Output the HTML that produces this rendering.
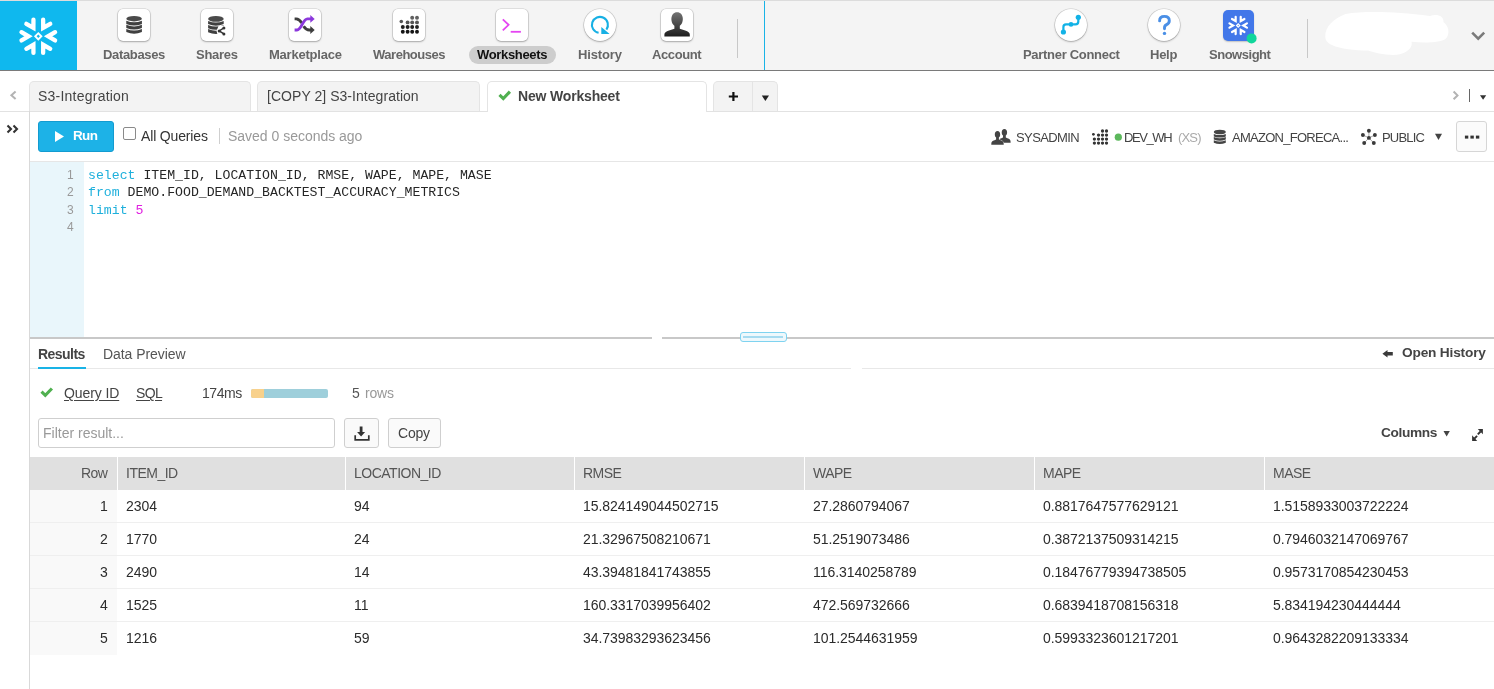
<!DOCTYPE html>
<html><head><meta charset="utf-8">
<style>
html,body{margin:0;padding:0;}
body{width:1494px;height:689px;overflow:hidden;position:relative;background:#fff;font-family:"Liberation Sans", sans-serif;}
.a{position:absolute;box-sizing:border-box;}
.t{position:absolute;white-space:nowrap;line-height:1;will-change:transform;}
.code{position:absolute;left:88px;font-family:"Liberation Mono", monospace;font-size:13.2px;line-height:1;white-space:pre;color:#262626;will-change:transform;}
.kw{color:#1fb0dc;}
.num{color:#e01fe0;}
.ibox{position:absolute;top:8.8px;width:32px;height:32px;background:#fff;border-radius:5px;box-shadow:0 0 0 0.6px rgba(0,0,0,0.16),0 1px 2px rgba(0,0,0,0.25);}
.icirc{position:absolute;top:8.8px;width:32px;height:32px;background:#fff;border-radius:50%;box-shadow:0 0 0 0.6px rgba(0,0,0,0.16),0 1px 2px rgba(0,0,0,0.25);}
svg{position:absolute;overflow:visible;}
</style></head><body>

<!-- ================= NAV BAR ================= -->
<div class="a" style="left:0;top:0;width:1494px;height:71px;background:#f4f4f4;border-top:1px solid #dcdcdc;border-bottom:1px solid #7a7a7a;"></div>
<div class="a" style="left:0;top:1px;width:77px;height:69px;background:#0fb8ee;"></div>
<svg style="left:0;top:0" width="77" height="70" viewBox="0 0 77 70">
  <g transform="translate(38.3 36.3)" fill="none" stroke="#fff" stroke-width="4.3" stroke-linecap="round" stroke-linejoin="miter">
    <polyline id="chev" points="-16.8,-4.1 -9.8,0 -16.8,4.1"/>
    <use href="#chev" transform="rotate(60)"/>
    <use href="#chev" transform="rotate(120)"/>
    <use href="#chev" transform="rotate(180)"/>
    <use href="#chev" transform="rotate(240)"/>
    <use href="#chev" transform="rotate(300)"/>
    <rect x="-2.15" y="-2.15" width="4.3" height="4.3" stroke-width="1.9" transform="rotate(45)"/>
  </g>
</svg>

<!-- nav icons -->
<div class="ibox" style="left:118px"></div>
<svg style="left:0;top:0" width="1" height="1">
  <g fill="#404040">
    <ellipse cx="134.1" cy="18.65" rx="7.8" ry="2.75" fill="#4a4a4a"/>
    <path d="M126.3,20.7 v3.2 q7.8,3.2 15.6,0 v-3.2 q-7.8,3.2 -15.6,0z"/><path d="M126.3,24.8 v3.2 q7.8,3.2 15.6,0 v-3.2 q-7.8,3.2 -15.6,0z"/><path d="M126.3,28.9 v3.2 q7.8,3.2 15.6,0 v-3.2 q-7.8,3.2 -15.6,0z"/>
  </g>
</svg>
<div class="ibox" style="left:201px"></div>
<svg style="left:0;top:0" width="1" height="1">
  <defs><clipPath id="shcl"><path d="M205,10 H230 V25 L218.5,26 L216.5,31 L218,36 H205Z"/></clipPath></defs>
  <g fill="#404040">
    <ellipse cx="215.9" cy="18.9" rx="7.8" ry="2.9" fill="#4a4a4a"/>
    <g clip-path="url(#shcl)">
      <path d="M208.1,20.9 v3.2 q7.8,3.2 15.6,0 v-3.2 q-7.8,3.2 -15.6,0z"/>
      <path d="M208.1,25 v3.2 q7.8,3.2 15.6,0 v-3.2 q-7.8,3.2 -15.6,0z"/>
      <path d="M208.1,29.1 v3.2 q7.8,3.2 15.6,0 v-3.2 q-7.8,3.2 -15.6,0z"/>
    </g>
  </g>
  <g fill="none" stroke="#333" stroke-width="1.4"><polyline points="223.9,27.9 219.2,30.9 223.9,33.9"/></g>
  <g fill="#333"><circle cx="223.9" cy="27.9" r="1.5"/><circle cx="219.2" cy="30.9" r="1.5"/><circle cx="223.9" cy="33.9" r="1.5"/></g>
</svg>
<div class="ibox" style="left:289px"></div>
<svg style="left:0;top:0" width="1" height="1">
  <g fill="none" stroke-width="2.9">
    <path d="M294.6,18.9 h1.6 c2.6,0 4,1.6 5.6,4.2" stroke="#3e3e3e"/>
    <path d="M303.6,26.2 c1.6,2.4 3,3.8 5.6,3.8 h2.2" stroke="#3e3e3e"/>
    <path d="M294.6,30 h2.4 c4.6,0 5.8,-11.1 10.4,-11.1 h3.6" stroke="#8b38dc"/>
  </g>
  <path d="M310.3,15 l4.4,3.9 l-4.4,3.9z" fill="#8b38dc"/>
  <path d="M310.3,26.1 l4.4,3.9 l-4.4,3.9z" fill="#3e3e3e"/>
</svg>
<div class="ibox" style="left:393.4px"></div>
<svg style="left:0;top:0" width="1" height="1">
  <circle cx="402.8" cy="31.8" r="1.95" fill="#151515"/><circle cx="407.6" cy="31.8" r="1.95" fill="#151515"/><circle cx="412.2" cy="31.8" r="1.95" fill="#151515"/><circle cx="417" cy="31.8" r="1.95" fill="#151515"/><circle cx="402.8" cy="27" r="1.95" fill="#1f1f1f"/><circle cx="407.6" cy="27" r="1.95" fill="#1f1f1f"/><circle cx="412.2" cy="27" r="1.95" fill="#1f1f1f"/><circle cx="417" cy="27" r="1.95" fill="#1f1f1f"/><circle cx="407.6" cy="22.4" r="1.95" fill="#555"/><circle cx="412.2" cy="22.4" r="1.95" fill="#555"/><circle cx="417" cy="22.4" r="1.95" fill="#555"/><circle cx="401.3" cy="21.5" r="1.8" fill="#555"/><circle cx="412.2" cy="17.8" r="1.95" fill="#606060"/><circle cx="417" cy="17.8" r="1.95" fill="#606060"/>
</svg>
<div class="a" style="left:469px;top:46px;width:87px;height:18px;border-radius:9px;background:#cdcdcd;"></div>
<div class="ibox" style="left:496px"></div>
<svg style="left:0;top:0" width="1" height="1">
  <g fill="none" stroke="#e545f2" stroke-width="1.8" stroke-linecap="butt">
    <polyline points="502.8,19.3 508.6,24.8 502.8,30.3"/>
    <line x1="510.7" y1="31.8" x2="520.9" y2="31.8"/>
  </g>
</svg>
<div class="icirc" style="left:583.7px"></div>
<svg style="left:0;top:0" width="1" height="1">
  <path d="M598.6,32.8 A8,8 0 1 1 606.4,29.6" fill="none" stroke="#17b0e4" stroke-width="2.1"/>
  <path d="M601.3,27 v6.9 h8.3z" fill="#17b0e4"/>
</svg>
<div class="ibox" style="left:661.3px;width:31.5px"></div>
<svg style="left:0;top:0" width="1" height="1">
  <defs><linearGradient id="acg" gradientUnits="userSpaceOnUse" x1="0" y1="12" x2="0" y2="37"><stop offset="0" stop-color="#747474"/><stop offset="1" stop-color="#1c1c1c"/></linearGradient></defs>
  <g fill="url(#acg)">
    <path d="M677.1,12.2 C680.4,12.2 682.8,14.6 682.8,19 C682.8,23.4 680.6,26.4 677.1,26.4 C673.6,26.4 671.4,23.4 671.4,19 C671.4,14.6 673.8,12.2 677.1,12.2Z"/>
    <path d="M664.4,36.6 V34.6 C664.4,32.6 666,31.6 669,30.6 L674.4,28.7 V24 H679.8 V28.7 L685.2,30.6 C688.2,31.6 689.8,32.6 689.8,34.6 V36.6 Z"/>
  </g>
</svg>
<div class="a" style="left:737px;top:19px;width:1px;height:39px;background:#c8c8c8;"></div>
<div class="a" style="left:763.5px;top:1px;width:1.6px;height:69px;background:#19b3e6;"></div>

<div class="icirc" style="left:1054.7px"></div>
<svg style="left:0;top:0" width="1" height="1">
  <g fill="none" stroke="#12b2e6" stroke-width="2.2" stroke-linejoin="round">
    <path d="M1063.4,32 V27 q0,-2.6 2.6,-2.6 H1075.5 q2.8,0 2.8,-2.8 V17.3"/>
  </g>
  <g fill="#12b2e6"><circle cx="1063.4" cy="32" r="2.6"/><circle cx="1071" cy="24.4" r="2.3"/><circle cx="1078.3" cy="17.3" r="2.6"/></g>
</svg>
<div class="icirc" style="left:1148px"></div>
<svg style="left:0;top:0" width="1" height="1">
  <path d="M1159.6,20.9 q0,-4.5 4.8,-4.5 q4.9,0 4.9,4.3 q0,2.6 -2.7,3.9 q-2.1,1 -2.1,3.2 v1" fill="none" stroke="#4a8fe6" stroke-width="2.9" stroke-linecap="round"/>
  <circle cx="1164.5" cy="33.4" r="1.7" fill="#4a8fe6"/>
</svg>
<div class="a" style="left:1222.7px;top:10.2px;width:31.2px;height:31px;border-radius:5px;background:#4277e9;box-shadow:0 1px 1.5px rgba(0,0,0,0.2);"></div>
<svg style="left:0;top:0" width="1" height="1">
  <g transform="translate(1238.2 25.5) scale(0.52)" fill="none" stroke="#fff" stroke-width="4.3" stroke-linecap="round" stroke-linejoin="miter">
    <use href="#chev"/>
    <use href="#chev" transform="rotate(60)"/>
    <use href="#chev" transform="rotate(120)"/>
    <use href="#chev" transform="rotate(180)"/>
    <use href="#chev" transform="rotate(240)"/>
    <use href="#chev" transform="rotate(300)"/>
    <rect x="-2.15" y="-2.15" width="4.3" height="4.3" stroke-width="2.6" transform="rotate(45)"/>
  </g>
  <circle cx="1251.6" cy="38.4" r="5" fill="#10d69b"/>
</svg>
<div class="a" style="left:1307px;top:19px;width:1px;height:39px;background:#c8c8c8;"></div>
<svg style="left:0;top:0" width="1" height="1">
  <path fill="#fff" d="M1325.3,36.4 C1325,27 1333,19 1345.5,14 C1365,11 1395,11.5 1430,16 C1437,13.5 1444,16 1443.5,22 C1449,26 1450,34 1446,38.5 C1442,42.5 1425,43.5 1411.5,41.8 C1413,47 1408,53 1397,54.8 C1385,55.5 1375,52.5 1368,50.5 C1355,50.5 1340,49 1332,45 C1327,42.5 1325.3,40 1325.3,36.4 Z"/>
  <polyline points="1472.2,32.6 1478.2,38.6 1484.2,32.6" fill="none" stroke="#7a7a7a" stroke-width="2.6"/>
</svg>

<!-- ================= TAB BAR ================= -->
<div class="a" style="left:0;top:111px;width:1494px;height:1px;background:#e2e2e2;"></div>
<svg style="left:0;top:0" width="1" height="1">
  <polyline points="15.6,91.5 11.4,95.3 15.6,99.1" fill="none" stroke="#b3b3b3" stroke-width="2"/>
</svg>
<div class="a" style="left:29px;top:81px;width:221.5px;height:30px;background:#f3f3f3;border:1px solid #e4e4e4;border-bottom:none;border-radius:5px 5px 0 0;"></div>
<div class="a" style="left:257.3px;top:81px;width:222.7px;height:30px;background:#f3f3f3;border:1px solid #e4e4e4;border-bottom:none;border-radius:5px 5px 0 0;"></div>
<div class="a" style="left:486.7px;top:81px;width:220.6px;height:31px;background:#fff;border:1px solid #e4e4e4;border-bottom:none;border-radius:5px 5px 0 0;"></div>
<svg style="left:0;top:0" width="1" height="1">
  <polyline points="499.5,94.8 503.3,98.5 509.9,91.7" fill="none" stroke="#50b050" stroke-width="3.1"/>
</svg>
<div class="a" style="left:713.3px;top:81px;width:65.1px;height:30px;background:#f3f3f3;border:1px solid #e4e4e4;border-bottom:none;border-radius:5px 5px 0 0;"></div>
<div class="a" style="left:752px;top:82px;width:1px;height:29px;background:#e4e4e4;"></div>
<svg style="left:0;top:0" width="1" height="1">
  <path d="M728.8,96.5 h9.2 M733.4,91.9 v9.2" stroke="#111" stroke-width="2.2"/>
  <path d="M761.8,95.6 h7.2 l-3.6,5.4z" fill="#222"/>
  <polyline points="1453.6,91.5 1457.5,95.4 1453.6,99.3" fill="none" stroke="#b3b3b3" stroke-width="2"/>
  <path d="M1480,95.3 h6.2 l-3.1,4.4z" fill="#333"/>
</svg>
<div class="a" style="left:1469px;top:89px;width:1.2px;height:13px;background:#666;"></div>

<!-- ================= LEFT SIDEBAR ================= -->
<div class="a" style="left:29px;top:111px;width:1px;height:578px;background:#d9d9d9;"></div>
<svg style="left:0;top:0" width="1" height="1">
  <g fill="none" stroke="#333" stroke-width="2.1">
    <polyline points="7.5,125.5 11,129 7.5,132.5"/>
    <polyline points="13.5,125.5 17,129 13.5,132.5"/>
  </g>
</svg>

<!-- ================= TOOLBAR ================= -->
<div class="a" style="left:38px;top:121px;width:76px;height:31px;border-radius:3px;background:#1db2e7;border:1px solid #139bd0;"></div>
<svg style="left:0;top:0" width="1" height="1">
  <path d="M55,131 L64,136.5 L55,142z" fill="#fff"/>
</svg>
<div class="a" style="left:123px;top:127.4px;width:13px;height:12.6px;border-radius:2px;background:#fff;border:1px solid #8a8a8a;"></div>
<div class="a" style="left:218.7px;top:127.6px;width:1px;height:16.7px;background:#cfcfcf;"></div>

<svg style="left:0;top:0" width="1" height="1">
  <g fill="#444">
    <g transform="translate(1004.4 132.4)"><path d="M0,-3.4 C1.7,-3.4 2.7,-2 2.7,0 C2.7,1.6 2.1,2.6 1.4,3 V5.2 L3,5.9 C5.2,6.6 6.2,7.6 6.2,9.4 V10.4 H-6.2 V9.4 C-6.2,7.6 -5.2,6.6 -3,5.9 L-1.4,5.2 V3 C-2.1,2.6 -2.7,1.6 -2.7,0 C-2.7,-2 -1.7,-3.4 0,-3.4 Z"/></g>
    <g transform="translate(997.5 134.4)" stroke="#fff" stroke-width="1" paint-order="stroke"><path d="M0,-3.4 C1.7,-3.4 2.7,-2 2.7,0 C2.7,1.6 2.1,2.6 1.4,3 V5.2 L3,5.9 C5.2,6.6 6.2,7.6 6.2,9.4 V10.4 H-6.2 V9.4 C-6.2,7.6 -5.2,6.6 -3,5.9 L-1.4,5.2 V3 C-2.1,2.6 -2.7,1.6 -2.7,0 C-2.7,-2 -1.7,-3.4 0,-3.4 Z"/></g>
  </g>
  <g fill="#333"><circle cx="1094.4" cy="143.1" r="1.65"/><circle cx="1098.5" cy="143.1" r="1.65"/><circle cx="1102.5" cy="143.1" r="1.65"/><circle cx="1106.5" cy="143.1" r="1.65"/><circle cx="1094.4" cy="139.1" r="1.65"/><circle cx="1098.5" cy="139.1" r="1.65"/><circle cx="1102.5" cy="139.1" r="1.65"/><circle cx="1106.5" cy="139.1" r="1.65"/><circle cx="1098.5" cy="135.1" r="1.65"/><circle cx="1102.5" cy="135.1" r="1.65"/><circle cx="1106.5" cy="135.1" r="1.65"/><circle cx="1093.4" cy="134.3" r="1.4"/><circle cx="1102.5" cy="131" r="1.65"/><circle cx="1106.5" cy="131" r="1.65"/></g>
  <circle cx="1118.3" cy="137.2" r="3.6" fill="#5cb85c"/>
  <g fill="#444">
    <ellipse cx="1219.8" cy="132" rx="6" ry="2.3" fill="#454545"/>
    <path d="M1213.8,133.9 v2.5 q6.0,2.4 12,0 v-2.5 q-6.0,2.4 -12,0z"/><path d="M1213.8,137.1 v2.5 q6.0,2.4 12,0 v-2.5 q-6.0,2.4 -12,0z"/><path d="M1213.8,140.3 v2.5 q6.0,2.4 12,0 v-2.5 q-6.0,2.4 -12,0z"/>
  </g>
  <g stroke="#888" stroke-width="0.7" fill="none">
    <line x1="1368.9" y1="130.8" x2="1368.9" y2="137.9"/><line x1="1362.9" y1="135" x2="1368.9" y2="137.9"/><line x1="1374.9" y1="135" x2="1368.9" y2="137.9"/><line x1="1364.2" y1="143" x2="1368.9" y2="137.9"/><line x1="1373.8" y1="143" x2="1368.9" y2="137.9"/>
  </g>
  <g fill="#3a3a3a">
    <circle cx="1368.9" cy="130.8" r="1.95"/><circle cx="1362.9" cy="135" r="1.95"/><circle cx="1374.9" cy="135" r="1.95"/><circle cx="1368.9" cy="137.9" r="1.95"/><circle cx="1364.2" cy="143" r="1.95"/><circle cx="1373.8" cy="143" r="1.95"/>
  </g>
  <path d="M1435,133.8 h7 l-3.5,6.1z" fill="#444"/>
</svg>
<div class="a" style="left:1456.2px;top:121.4px;width:30.7px;height:30.2px;border-radius:3px;background:#fbfbfb;border:1px solid #d6d6d6;"></div>
<svg style="left:0;top:0" width="1" height="1">
  <g fill="#333"><rect x="1464.9" y="135.6" width="3.4" height="3"/><rect x="1470.4" y="135.6" width="3.4" height="3"/><rect x="1475.9" y="135.6" width="3.4" height="3"/></g>
</svg>
<div class="a" style="left:30px;top:160.8px;width:1464px;height:1px;background:#e6e6e6;"></div>

<!-- ================= EDITOR ================= -->
<div class="a" style="left:30px;top:162px;width:54px;height:175px;background:#e9f6fb;"></div>
<div class="code" style="top:168.6px"><span class="kw">select</span> ITEM_ID, LOCATION_ID, RMSE, WAPE, MAPE, MASE</div>
<div class="code" style="top:186.1px"><span class="kw">from</span> DEMO.FOOD_DEMAND_BACKTEST_ACCURACY_METRICS</div>
<div class="code" style="top:203.6px"><span class="kw">limit</span> <span class="num">5</span></div>

<!-- splitter -->
<div class="a" style="left:30px;top:337px;width:622px;height:2px;background:#c8c8c8;"></div>
<div class="a" style="left:662px;top:337px;width:832px;height:2px;background:#c8c8c8;"></div>
<div class="a" style="left:739.5px;top:332.2px;width:47.5px;height:9.5px;border-radius:3px;background:#eef8fc;border:1px solid #7fd3f0;"></div>
<div class="a" style="left:743px;top:336px;width:40px;height:2px;background:#a6dbf0;"></div>

<!-- ================= RESULTS ================= -->
<div class="a" style="left:30px;top:368px;width:821px;height:1px;background:#e8e8e8;"></div>
<div class="a" style="left:862px;top:368px;width:632px;height:1px;background:#e8e8e8;"></div>
<div class="a" style="left:38px;top:367px;width:48px;height:2px;background:#19b3e6;"></div>
<svg style="left:0;top:0" width="1" height="1">
  <path d="M1382.4,353.7 L1387.5,350 V352.1 H1392.8 V355.5 H1387.5 V357.4 Z" fill="#3a3a3a"/>
  <polyline points="41.5,391.6 45.3,395.3 51.9,388.5" fill="none" stroke="#50b050" stroke-width="3.1"/>
</svg>
<div class="a" style="left:251px;top:388.9px;width:77px;height:9.1px;border-radius:2px;background:#9ecfdb;"></div>
<div class="a" style="left:251px;top:388.9px;width:13px;height:9.1px;border-radius:2px 0 0 2px;background:#f8d18c;"></div>

<div class="a" style="left:38px;top:418.2px;width:296.6px;height:30.2px;border-radius:3px;background:#fff;border:1px solid #cfcfcf;"></div>
<div class="a" style="left:344px;top:418.2px;width:34.8px;height:30.2px;border-radius:3px;background:#fafafa;border:1px solid #cfcfcf;"></div>
<svg style="left:0;top:0" width="1" height="1">
  <path d="M359.7,426.5 h2.8 v5.6 h2.6 l-4,4.3 l-4,-4.3 h2.6z" fill="#333"/>
  <path d="M355.2,435.3 v4.6 h13.6 v-4.6" fill="none" stroke="#333" stroke-width="1.7"/>
</svg>
<div class="a" style="left:388px;top:418.2px;width:52.6px;height:30.2px;border-radius:3px;background:#fafafa;border:1px solid #cfcfcf;"></div>
<svg style="left:0;top:0" width="1" height="1">
  <path d="M1443.5,431 h6.3 l-3.15,5.5z" fill="#444"/>
  <g fill="#333">
    <path d="M1477.8,429 H1482.9 V434.3 Z"/>
    <path d="M1472.1,435.3 V440.9 H1477.2 Z"/>
  </g>
  <g stroke="#333" stroke-width="1.9"><line x1="1480.6" y1="431.5" x2="1477.8" y2="434.3"/><line x1="1474.4" y1="438.6" x2="1477.1" y2="435.9"/></g>
</svg>

<!-- ================= TABLE ================= -->
<div class="a" style="left:30px;top:457px;width:1464px;height:33px;background:#e0e0e0;"></div>
<div class="a" style="left:117px;top:457px;width:1px;height:33px;background:#fff;"></div>
<div class="a" style="left:345px;top:457px;width:1px;height:33px;background:#fff;"></div>
<div class="a" style="left:574px;top:457px;width:1px;height:33px;background:#fff;"></div>
<div class="a" style="left:804px;top:457px;width:1px;height:33px;background:#fff;"></div>
<div class="a" style="left:1034px;top:457px;width:1px;height:33px;background:#fff;"></div>
<div class="a" style="left:1264px;top:457px;width:1px;height:33px;background:#fff;"></div>
<div class="a" style="left:30px;top:490px;width:87px;height:165px;background:#f9f9f9;"></div>
<div class="a" style="left:30px;top:522px;width:1464px;height:1px;background:#efefef;"></div>
<div class="a" style="left:30px;top:555px;width:1464px;height:1px;background:#efefef;"></div>
<div class="a" style="left:30px;top:588px;width:1464px;height:1px;background:#efefef;"></div>
<div class="a" style="left:30px;top:621px;width:1464px;height:1px;background:#efefef;"></div>

<div class="t" style="left:103.15px;top:48.20px;font-size:13px;color:#666;font-weight:700;letter-spacing:-0.342px;">Databases</div>
<div class="t" style="left:196.25px;top:48.20px;font-size:13px;color:#666;font-weight:700;letter-spacing:-0.292px;">Shares</div>
<div class="t" style="left:268.55px;top:48.20px;font-size:13px;color:#666;font-weight:700;letter-spacing:-0.225px;">Marketplace</div>
<div class="t" style="left:373.15px;top:48.20px;font-size:13px;color:#666;font-weight:700;letter-spacing:-0.480px;">Warehouses</div>
<div class="t" style="left:477.35px;top:48.20px;font-size:13px;color:#111;font-weight:700;letter-spacing:-0.328px;">Worksheets</div>
<div class="t" style="left:577.55px;top:48.20px;font-size:13px;color:#666;font-weight:700;letter-spacing:-0.148px;">History</div>
<div class="t" style="left:652.15px;top:48.20px;font-size:13px;color:#666;font-weight:700;letter-spacing:-0.383px;">Account</div>
<div class="t" style="left:1022.75px;top:48.20px;font-size:13px;color:#666;font-weight:700;letter-spacing:-0.302px;">Partner Connect</div>
<div class="t" style="left:1149.80px;top:48.20px;font-size:13px;color:#666;font-weight:700;letter-spacing:-0.257px;">Help</div>
<div class="t" style="left:1209.05px;top:48.20px;font-size:13px;color:#666;font-weight:700;letter-spacing:-0.477px;">Snowsight</div>
<div class="t" style="left:37.70px;top:89.15px;font-size:14px;color:#444;letter-spacing:0.227px;">S3-Integration</div>
<div class="t" style="left:267.00px;top:89.15px;font-size:14px;color:#444;letter-spacing:0.043px;">[COPY 2] S3-Integration</div>
<div class="t" style="left:517.50px;top:89.15px;font-size:14px;color:#444;font-weight:700;letter-spacing:-0.175px;">New Worksheet</div>
<div class="t" style="left:72.50px;top:129.37px;font-size:13.5px;color:#fff;font-weight:700;letter-spacing:-0.671px;">Run</div>
<div class="t" style="left:141.40px;top:129.05px;font-size:14px;color:#333;letter-spacing:-0.157px;">All Queries</div>
<div class="t" style="left:227.80px;top:129.05px;font-size:14px;color:#999;letter-spacing:-0.014px;">Saved 0 seconds ago</div>
<div class="t" style="left:1016.00px;top:131.00px;font-size:13px;color:#444;letter-spacing:-0.600px;">SYSADMIN</div>
<div class="t" style="left:1123.90px;top:131.00px;font-size:13px;color:#444;letter-spacing:-1.404px;">DEV_WH</div>
<div class="t" style="left:1177.50px;top:131.00px;font-size:13px;color:#aaa;letter-spacing:-0.833px;">(XS)</div>
<div class="t" style="left:1232.40px;top:131.00px;font-size:13px;color:#444;letter-spacing:-0.730px;">AMAZON_FORECA...</div>
<div class="t" style="left:1382.10px;top:131.00px;font-size:13px;color:#444;letter-spacing:-0.812px;">PUBLIC</div>
<div class="t" style="left:67.40px;top:168.54px;font-size:12px;color:#999;font-family:"Liberation Mono", monospace;">1</div>
<div class="t" style="left:67.40px;top:186.04px;font-size:12px;color:#999;font-family:"Liberation Mono", monospace;">2</div>
<div class="t" style="left:67.40px;top:203.54px;font-size:12px;color:#999;font-family:"Liberation Mono", monospace;">3</div>
<div class="t" style="left:67.40px;top:221.04px;font-size:12px;color:#999;font-family:"Liberation Mono", monospace;">4</div>
<div class="t" style="left:37.90px;top:346.95px;font-size:14px;color:#444;font-weight:700;letter-spacing:-0.529px;">Results</div>
<div class="t" style="left:102.80px;top:346.95px;font-size:14px;color:#555;letter-spacing:-0.060px;">Data Preview</div>
<div class="t" style="left:1401.80px;top:346.30px;font-size:13.7px;color:#444;font-weight:700;letter-spacing:-0.186px;">Open History</div>
<div class="t" style="left:64.20px;top:385.75px;font-size:14px;color:#444;letter-spacing:-0.102px;text-decoration:underline;text-underline-offset:2px;">Query ID</div>
<div class="t" style="left:136.20px;top:385.75px;font-size:14px;color:#444;letter-spacing:-0.657px;text-decoration:underline;text-underline-offset:2px;">SQL</div>
<div class="t" style="left:201.70px;top:385.75px;font-size:14px;color:#444;letter-spacing:-0.430px;">174ms</div>
<div class="t" style="left:351.90px;top:385.75px;font-size:14px;color:#555;">5</div>
<div class="t" style="left:364.70px;top:385.75px;font-size:14px;color:#999;letter-spacing:-0.220px;">rows</div>
<div class="t" style="left:43.40px;top:426.35px;font-size:14px;color:#999;">Filter result...</div>
<div class="t" style="left:398.00px;top:426.35px;font-size:14px;color:#444;letter-spacing:-0.194px;">Copy</div>
<div class="t" style="left:1380.90px;top:426.00px;font-size:13.7px;color:#444;font-weight:700;letter-spacing:-0.375px;">Columns</div>
<div class="t" style="left:80.50px;top:466.05px;font-size:14px;color:#555;letter-spacing:-0.553px;">Row</div>
<div class="t" style="left:125.90px;top:466.05px;font-size:14px;color:#555;letter-spacing:-0.500px;">ITEM_ID</div>
<div class="t" style="left:353.90px;top:466.05px;font-size:14px;color:#555;letter-spacing:-0.500px;">LOCATION_ID</div>
<div class="t" style="left:583.40px;top:466.05px;font-size:14px;color:#555;letter-spacing:-0.500px;">RMSE</div>
<div class="t" style="left:813.20px;top:466.05px;font-size:14px;color:#555;letter-spacing:-0.500px;">WAPE</div>
<div class="t" style="left:1043.20px;top:466.05px;font-size:14px;color:#555;letter-spacing:-0.500px;">MAPE</div>
<div class="t" style="left:1273.20px;top:466.05px;font-size:14px;color:#555;letter-spacing:-0.500px;">MASE</div>
<div class="t" style="left:99.61px;top:499.05px;font-size:14px;color:#2b2b2b;letter-spacing:-0.040px;">1</div>
<div class="t" style="left:125.90px;top:499.05px;font-size:14px;color:#2b2b2b;letter-spacing:-0.040px;">2304</div>
<div class="t" style="left:353.90px;top:499.05px;font-size:14px;color:#2b2b2b;letter-spacing:-0.040px;">94</div>
<div class="t" style="left:583.40px;top:499.05px;font-size:14px;color:#2b2b2b;letter-spacing:-0.040px;">15.824149044502715</div>
<div class="t" style="left:813.20px;top:499.05px;font-size:14px;color:#2b2b2b;letter-spacing:-0.040px;">27.2860794067</div>
<div class="t" style="left:1043.20px;top:499.05px;font-size:14px;color:#2b2b2b;letter-spacing:-0.040px;">0.8817647577629121</div>
<div class="t" style="left:1273.20px;top:499.05px;font-size:14px;color:#2b2b2b;letter-spacing:-0.040px;">1.5158933003722224</div>
<div class="t" style="left:99.61px;top:532.05px;font-size:14px;color:#2b2b2b;letter-spacing:-0.040px;">2</div>
<div class="t" style="left:125.90px;top:532.05px;font-size:14px;color:#2b2b2b;letter-spacing:-0.040px;">1770</div>
<div class="t" style="left:353.90px;top:532.05px;font-size:14px;color:#2b2b2b;letter-spacing:-0.040px;">24</div>
<div class="t" style="left:583.40px;top:532.05px;font-size:14px;color:#2b2b2b;letter-spacing:-0.040px;">21.32967508210671</div>
<div class="t" style="left:813.20px;top:532.05px;font-size:14px;color:#2b2b2b;letter-spacing:-0.040px;">51.2519073486</div>
<div class="t" style="left:1043.20px;top:532.05px;font-size:14px;color:#2b2b2b;letter-spacing:-0.040px;">0.3872137509314215</div>
<div class="t" style="left:1273.20px;top:532.05px;font-size:14px;color:#2b2b2b;letter-spacing:-0.040px;">0.7946032147069767</div>
<div class="t" style="left:99.61px;top:565.05px;font-size:14px;color:#2b2b2b;letter-spacing:-0.040px;">3</div>
<div class="t" style="left:125.90px;top:565.05px;font-size:14px;color:#2b2b2b;letter-spacing:-0.040px;">2490</div>
<div class="t" style="left:353.90px;top:565.05px;font-size:14px;color:#2b2b2b;letter-spacing:-0.040px;">14</div>
<div class="t" style="left:583.40px;top:565.05px;font-size:14px;color:#2b2b2b;letter-spacing:-0.040px;">43.39481841743855</div>
<div class="t" style="left:813.20px;top:565.05px;font-size:14px;color:#2b2b2b;letter-spacing:-0.040px;">116.3140258789</div>
<div class="t" style="left:1043.20px;top:565.05px;font-size:14px;color:#2b2b2b;letter-spacing:-0.040px;">0.18476779394738505</div>
<div class="t" style="left:1273.20px;top:565.05px;font-size:14px;color:#2b2b2b;letter-spacing:-0.040px;">0.9573170854230453</div>
<div class="t" style="left:99.61px;top:598.05px;font-size:14px;color:#2b2b2b;letter-spacing:-0.040px;">4</div>
<div class="t" style="left:125.90px;top:598.05px;font-size:14px;color:#2b2b2b;letter-spacing:-0.040px;">1525</div>
<div class="t" style="left:353.90px;top:598.05px;font-size:14px;color:#2b2b2b;letter-spacing:-0.040px;">11</div>
<div class="t" style="left:583.40px;top:598.05px;font-size:14px;color:#2b2b2b;letter-spacing:-0.040px;">160.3317039956402</div>
<div class="t" style="left:813.20px;top:598.05px;font-size:14px;color:#2b2b2b;letter-spacing:-0.040px;">472.569732666</div>
<div class="t" style="left:1043.20px;top:598.05px;font-size:14px;color:#2b2b2b;letter-spacing:-0.040px;">0.6839418708156318</div>
<div class="t" style="left:1273.20px;top:598.05px;font-size:14px;color:#2b2b2b;letter-spacing:-0.040px;">5.834194230444444</div>
<div class="t" style="left:99.61px;top:631.05px;font-size:14px;color:#2b2b2b;letter-spacing:-0.040px;">5</div>
<div class="t" style="left:125.90px;top:631.05px;font-size:14px;color:#2b2b2b;letter-spacing:-0.040px;">1216</div>
<div class="t" style="left:353.90px;top:631.05px;font-size:14px;color:#2b2b2b;letter-spacing:-0.040px;">59</div>
<div class="t" style="left:583.40px;top:631.05px;font-size:14px;color:#2b2b2b;letter-spacing:-0.040px;">34.73983293623456</div>
<div class="t" style="left:813.20px;top:631.05px;font-size:14px;color:#2b2b2b;letter-spacing:-0.040px;">101.2544631959</div>
<div class="t" style="left:1043.20px;top:631.05px;font-size:14px;color:#2b2b2b;letter-spacing:-0.040px;">0.5993323601217201</div>
<div class="t" style="left:1273.20px;top:631.05px;font-size:14px;color:#2b2b2b;letter-spacing:-0.040px;">0.9643282209133334</div>

</body></html>
